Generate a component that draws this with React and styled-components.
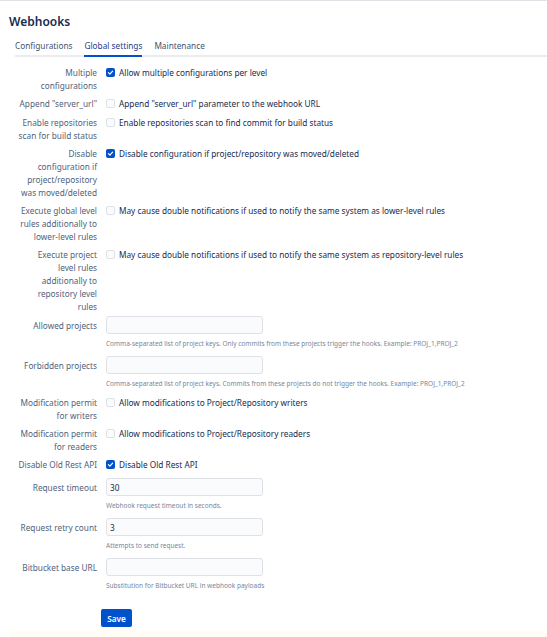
import React from "react";
import styled, { createGlobalStyle } from "styled-components";

const GlobalStyle = createGlobalStyle`
    body {
        margin: 0;
        background: #ffffff;
        font-family: "Noto Sans", "Open Sans", sans-serif;
        color: #172b4d;
    }
`;

const Page = styled.div`
    border-top: 1px solid #dfe1e6;
    padding-top: 12px;
`;

const Title = styled.h2`
    margin: 0 0 0 9px;
    font-size: 12px;
    line-height: 18px;
    font-weight: 600;
    color: #172b4d;
`;

const Tabs = styled.ul`
    display: flex;
    gap: 12px;
    list-style: none;
    margin: 5px 0 0 15px;
    padding: 0;
    border-bottom: 2px solid #ebecf0;
`;

const Tab = styled.li`
    font-size: 8.25px;
    line-height: 13px;
    padding: 3px 0 3px;
    margin-bottom: -2px;
    color: ${(p) => (p.$active ? "#253a8e" : "#42526e")};
    border-bottom: 2px solid ${(p) => (p.$active ? "#0052cc" : "transparent")};
`;

const Form = styled.form`
    padding: 4px 0 0 16px;
`;

const Row = styled.div`
    display: grid;
    grid-template-columns: 81px 1fr;
    column-gap: 9px;
    margin-top: ${(p) => p.$gap ?? 5}px;
    min-height: 14px;
`;

const Label = styled.div`
    text-align: right;
    font-size: 8.25px;
    line-height: 13px;
    color: #505f79;
    padding-top: ${(p) => (p.$input ? 3 : 0)}px;
    white-space: nowrap;
`;

const CheckLine = styled.label`
    display: flex;
    align-items: flex-start;
    gap: 4px;
    font-size: 8.25px;
    line-height: 13px;
    color: #172b4d;
    white-space: nowrap;
`;

const Box = styled.span`
    flex: none;
    width: 9px;
    height: 9px;
    margin-top: 2px;
    box-sizing: border-box;
    border-radius: 2px;
    display: flex;
    align-items: center;
    justify-content: center;
    background: ${(p) => (p.$checked ? "#0052cc" : "#fafbfc")};
    border: ${(p) => (p.$checked ? "none" : "1px solid #dfe1e6")};
`;

const Field = styled.div`
    display: flex;
    flex-direction: column;
`;

const Input = styled.input`
    box-sizing: border-box;
    width: 157px;
    height: 18px;
    margin: 0;
    padding: 0 3px;
    border: 1px solid #dfe1e6;
    border-radius: 3px;
    background: #fafbfc;
    font-family: inherit;
    font-size: 8.25px;
    color: #172b4d;
    outline: none;
`;

const Help = styled.div`
    margin-top: 3px;
    font-size: 6.5px;
    line-height: 14px;
    color: #7a869a;
    white-space: nowrap;
`;

const ButtonRow = styled.div`
    display: flex;
    margin-top: 16px;
    padding-left: 85px;
`;

const SaveButton = styled.button`
    width: 31px;
    height: 18px;
    border: none;
    border-radius: 2px;
    background: #0052cc;
    color: #ffffff;
    font-family: inherit;
    font-size: 8.25px;
    font-weight: 600;
    padding: 0;
`;

const Footer = styled.div`
    margin: 3px 0 0 10px;
    height: 8px;
    background: #fffdf6;
`;

const Check = ({ checked }) => (
    <Box $checked={checked}>
        {checked && (
            <svg width="7" height="7" viewBox="0 0 8 8">
                <path d="M1.6 4.2 L3.3 5.8 L6.4 2.4" fill="none" stroke="#fff" strokeWidth="1.4" strokeLinecap="round" strokeLinejoin="round" />
            </svg>
        )}
    </Box>
);

const lines = (arr) =>
    arr.map((l, i) => (
        <React.Fragment key={i}>
            {i > 0 && <br />}
            {l}
        </React.Fragment>
    ));

const checkRows = [
    { label: ["Multiple", "configurations"], text: "Allow multiple configurations per level", checked: true },
    { label: ['Append "server_url"'], text: 'Append "server_url" parameter to the webhook URL' },
    { label: ["Enable repositories", "scan for build status"], text: "Enable repositories scan to find commit for build status" },
    {
        label: ["Disable", "configuration if", "project/repository", "was moved/deleted"],
        text: "Disable configuration if project/repository was moved/deleted",
        checked: true,
    },
    {
        label: ["Execute global level", "rules additionally to", "lower-level rules"],
        text: "May cause double notifications if used to notify the same system as lower-level rules",
    },
    {
        label: ["Execute project", "level rules", "additionally to", "repository level", "rules"],
        text: "May cause double notifications if used to notify the same system as repository-level rules",
    },
];

const CheckRow = ({ label, text, checked, gap }) => (
    <Row $gap={gap}>
        <Label>{lines(label)}</Label>
        <CheckLine>
            <Check checked={checked} />
            <span>{text}</span>
        </CheckLine>
    </Row>
);

const InputRow = ({ label, value, help, gap }) => (
    <Row $gap={gap}>
        <Label $input>{label}</Label>
        <Field>
            <Input defaultValue={value} />
            <Help>{help}</Help>
        </Field>
    </Row>
);

export default function App() {
    return (
        <Page>
            <GlobalStyle />
            <Title>Webhooks</Title>
            <Tabs>
                <Tab>Configurations</Tab>
                <Tab $active>Global settings</Tab>
                <Tab>Maintenance</Tab>
            </Tabs>
            <Form onSubmit={(e) => e.preventDefault()}>
                {checkRows.map((r, i) => (
                    <CheckRow key={i} {...r} />
                ))}
                <InputRow
                    gap={3}
                    label="Allowed projects"
                    help="Comma-separated list of project keys. Only commits from these projects trigger the hooks. Example: PROJ_1,PROJ_2"
                />
                <InputRow
                    label="Forbidden projects"
                    help="Comma-separated list of project keys. Commits from these projects do not trigger the hooks. Example: PROJ_1,PROJ_2"
                />
                <CheckRow label={["Modification permit", "for writers"]} text="Allow modifications to Project/Repository writers" />
                <CheckRow label={["Modification permit", "for readers"]} text="Allow modifications to Project/Repository readers" />
                <CheckRow label={["Disable Old Rest API"]} text="Disable Old Rest API" checked />
                <InputRow gap={6} label="Request timeout" value="30" help="Webhook request timeout in seconds." />
                <InputRow label="Request retry count" value="3" help="Attempts to send request." />
                <InputRow label="Bitbucket base URL" help="Substitution for Bitbucket URL in webhook payloads" />
                <ButtonRow>
                    <SaveButton type="submit">Save</SaveButton>
                </ButtonRow>
            </Form>
            <Footer />
        </Page>
    );
}
